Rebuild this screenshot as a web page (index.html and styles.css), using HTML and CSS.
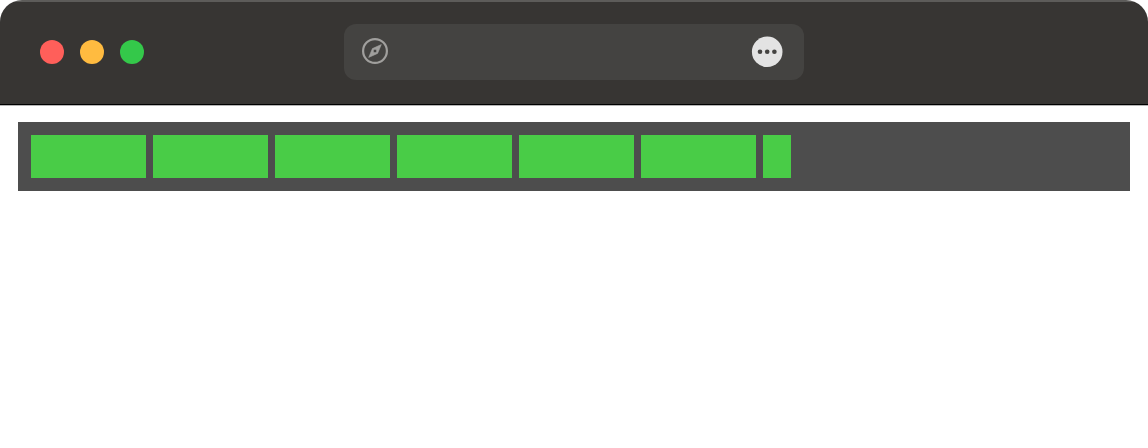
FILE: index.html
```html
<!DOCTYPE html>
<html lang="en">
<head>
    <meta charset="UTF-8">
    <meta name="viewport" content="width=device-width, initial-scale=1.0">
    <title>Progress bar</title>
    <link rel="stylesheet" href="styles.css">
</head>
<body>

    <header class="titlebar">
        <div class="window-buttons">
            <button type="button" class="close" aria-label="Close"></button>
            <button type="button" class="minimize" aria-label="Minimize"></button>
            <button type="button" class="maximize" aria-label="Maximize"></button>
        </div>

        <div class="address-bar">
            <svg class="compass" viewBox="0 0 26 26" aria-hidden="true">
                <circle cx="13" cy="13" r="11.9" fill="none" stroke="#a09f9d" stroke-width="2.2"/>
                <path fill="#a09f9d" stroke="#a09f9d" stroke-width="0.6" stroke-linejoin="round" fill-rule="evenodd" d="M19.3 6.6 L15.6 15.4 L6.7 19.4 L10.4 10.6 Z M13 11.2 a1.8 1.8 0 1 0 0 3.6 a1.8 1.8 0 1 0 0 -3.6 Z"/>
            </svg>
            <input type="text" aria-label="Address">
            <button type="button" class="more" aria-label="More">
                <svg viewBox="0 0 32 32" aria-hidden="true">
                    <circle cx="16.2" cy="15.8" r="15.3" fill="#e3e3e3"/>
                    <circle cx="9" cy="15.8" r="2.3" fill="#444341"/>
                    <circle cx="16.2" cy="15.8" r="2.3" fill="#444341"/>
                    <circle cx="23.4" cy="15.8" r="2.3" fill="#444341"/>
                </svg>
            </button>
        </div>
    </header>

    <main class="page">
        <div class="progress-track">
            <progress value="70" max="100" aria-label="Progress"></progress>
        </div>
    </main>

</body>
</html>
```
FILE: styles.css
```css
/* Global styles */
* {
    box-sizing: border-box;
}

body {
    font-family: "Liberation Sans", Arial, sans-serif;
    background-color: #fff;
    margin: 0;
}

button {
    padding: 0;
    border: none;
    border-radius: 50%;
    cursor: pointer;
}

/* Title bar */
.titlebar {
    display: grid;
    grid-template-columns: 1fr minmax(0, 460px) 1fr;
    align-items: center;
    padding: 24px 0;
    background: linear-gradient(#5d5c5a 0 2px, #373533 2px);
    border-bottom: 1px solid #000;
    border-radius: 22px 22px 0 0;
    box-shadow: 0 1px 0 #b5b5b5;
}

.window-buttons {
    display: flex;
    gap: 16px;
    padding-left: 40px;
}

.window-buttons button {
    width: 24px;
    height: 24px;
}

.close {
    background-color: #ff5f5a;
}

.minimize {
    background-color: #ffbb40;
}

.maximize {
    background-color: #34c84a;
}

/* Address bar */
.address-bar {
    display: flex;
    align-items: center;
    height: 56px;
    padding: 0 21px 0 18px;
    background-color: #444341;
    border-radius: 12px;
}

.compass {
    flex: none;
    width: 26px;
    height: 26px;
    margin-bottom: 2px;
}

.address-bar input {
    flex: 1;
    min-width: 0;
    height: 32px;
    padding: 0 12px;
    border: none;
    outline: none;
    background: none;
    color: #e3e3e3;
    font-size: 20px;
}

.more {
    flex: none;
    width: 32px;
    height: 32px;
    background: none;
}

.more svg {
    display: block;
}

/* Progress bar */
.page {
    padding: 17px 18px;
}

.progress-track {
    padding: 13px;
    background-color: #4d4d4d;
}

progress {
    appearance: none;
    display: block;
    width: 100%;
    height: 43px;
    border: none;
}

progress::-webkit-progress-bar {
    background-color: #4d4d4d;
}

progress::-webkit-progress-value {
    background: repeating-linear-gradient(to right, #49cc47 0 115px, #4d4d4d 115px 122px);
}
```
